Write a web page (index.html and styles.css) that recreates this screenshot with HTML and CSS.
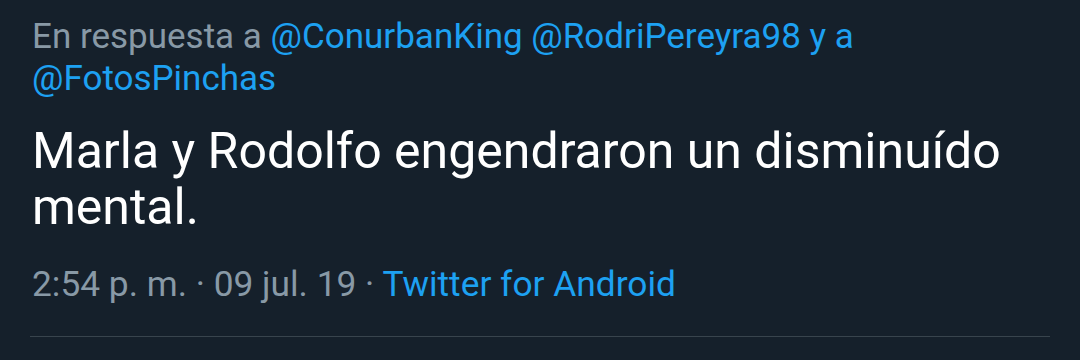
FILE: index.html
```html
<!DOCTYPE html>
<html>
    <head>
        <meta charset="utf-8" />
        <title>Tweet</title>
        <link rel="stylesheet" href="styles.css">
    </head>

    <body>
        <div id="tweet">
            <p id="respuesta">
                En respuesta a <a href="#">@ConurbanKing</a> <a href="#">@RodriPereyra98</a> <a href="#">y a</a>
                <a href="#">@FotosPinchas</a>
            </p>

            <p id="texto">Marla y Rodolfo engendraron un disminuído mental.</p>

            <p id="info">2:54 p. m. · 09 jul. 19 · <a href="#">Twitter for Android</a></p>

            <div id="separador"></div>
        </div>
    </body>
</html>
```

FILE: styles.css
```css
body{
    margin: 0;
    background-color: #15202b;
    font-family: Roboto, "Noto Sans", sans-serif;
}
#tweet{
    padding: 16px 30px 0 32px;
}
#tweet p{
    margin: 0;
}
#tweet a{
    color: #1da1f2;
    text-decoration: none;
}
#respuesta{
    color: #8899a6;
    font-size: 35px;
    line-height: 42px;
}
#texto{
    color: #ffffff;
    font-size: 50px;
    line-height: 56px;
    margin-top: 23px !important;
}
#info{
    color: #8899a6;
    font-size: 35.3px;
    line-height: 40px;
    margin-top: 29px !important;
}
#separador{
    height: 1px;
    background-color: #38444d;
    margin: 32px 0 0 -2px;
}
```
